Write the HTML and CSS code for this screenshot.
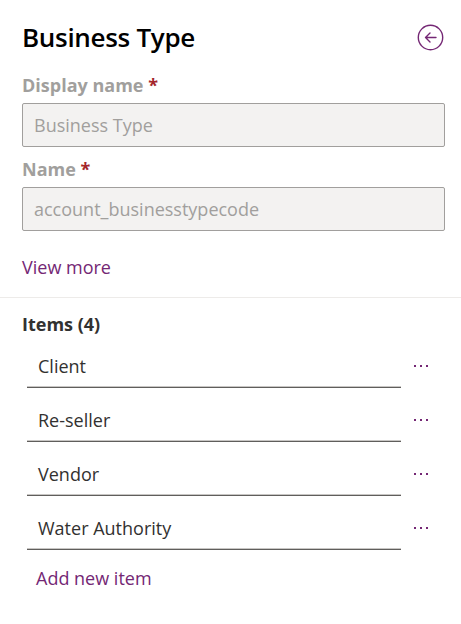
FILE: index.html
```html
<!DOCTYPE html>
<html>
<head>
<meta charset="utf-8">
<link rel="stylesheet" href="styles.css">
</head>
<body>
<div class="panel">
  <div class="header">
    <h1 class="title">Business Type</h1>
    <button class="back" aria-label="Back">
      <svg width="27" height="27" viewBox="0 0 27 27"><circle cx="13.5" cy="13.5" r="12.2" fill="none" stroke="#742774" stroke-width="1.4"/><path d="M19 13.5H8.5M13 9l-4.5 4.5L13 18" fill="none" stroke="#742774" stroke-width="1.4" stroke-linecap="round" stroke-linejoin="round"/></svg>
    </button>
  </div>
  <div class="field">
    <div class="label">Display name <span class="req">*</span></div>
    <div class="input">Business Type</div>
  </div>
  <div class="field">
    <div class="label">Name <span class="req">*</span></div>
    <div class="input">account_businesstypecode</div>
  </div>
  <div class="link view-more">View more</div>
</div>
<div class="divider"></div>
<div class="panel">
  <div class="items-title">Items (4)</div>
  <div class="items">
    <div class="item"><div class="item-box">Client</div><div class="more"><i></i><i></i><i></i></div></div>
    <div class="item"><div class="item-box">Re-seller</div><div class="more"><i></i><i></i><i></i></div></div>
    <div class="item"><div class="item-box">Vendor</div><div class="more"><i></i><i></i><i></i></div></div>
    <div class="item"><div class="item-box">Water Authority</div><div class="more"><i></i><i></i><i></i></div></div>
  </div>
  <div class="link add">Add new item</div>
</div>
</body>
</html>
```
FILE: styles.css
```css
html, body { margin: 0; padding: 0; background: #fff; }
body { font-family: "Open Sans", "Noto Sans", sans-serif; color: #323130; }
.panel { padding: 0 16px 0 22px; }
.header { display: flex; justify-content: space-between; align-items: center; padding-top: 17px; height: 40px; }
.title { margin: 0; font-size: 26px; font-weight: 600; color: #000; line-height: 40px; letter-spacing: -0.3px; }
.back { border: 0; background: none; padding: 0; margin-right: 1px; width: 27px; height: 27px; display: flex; }
.field { display: flex; flex-direction: column; }
.label { font-size: 18px; font-weight: 700; color: #a19f9d; line-height: 24px; margin-top: 16px; }
.field + .field .label { margin-top: 10px; }
.req { color: #a4262c; }
.input { margin-top: 6px; box-sizing: border-box; height: 44px; border: 1px solid #a19f9d; border-radius: 2px; background: #f3f2f1; color: #a19f9d; font-size: 18px; padding: 0 11px; display: flex; align-items: center; }
.link { color: #742774; font-size: 18px; line-height: 24px; }
.view-more { margin-top: 24px; }
.divider { height: 1px; background: #edebe9; margin-top: 18px; }
.items-title { font-size: 18px; font-weight: 700; color: #323130; line-height: 24px; margin-top: 14px; }
.items { display: flex; flex-direction: column; gap: 13px; margin-top: 10px; padding-left: 5px; }
.item { display: flex; align-items: center; }
.item-box { width: 374px; height: 41px; box-sizing: border-box; border-bottom: 1px solid #c8c6c4; box-shadow: 0 1px 0 #605e5c; font-size: 18px; padding: 0 11px; display: flex; align-items: center; color: #323130; }
.more { display: flex; gap: 4px; margin-left: 13px; margin-top: -2px; }
.more i { width: 2px; height: 2px; background: #742774; display: block; }
.add { margin-top: 17px; padding-left: 14px; }
```
